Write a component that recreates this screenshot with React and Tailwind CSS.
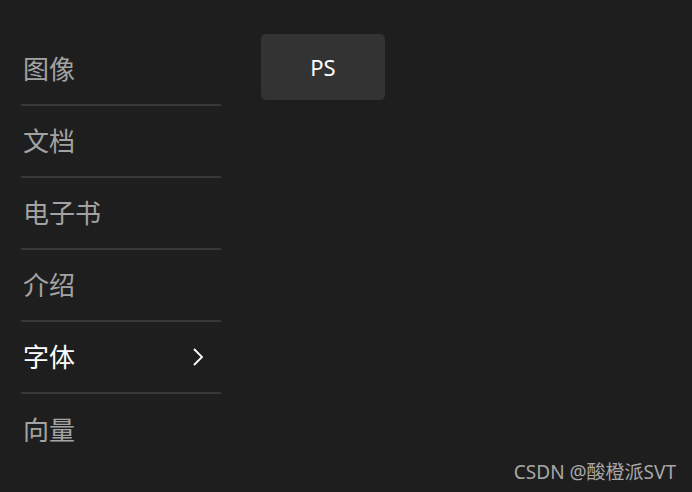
import React from 'react';

const items = [
    { label: '图像' },
    { label: '文档' },
    { label: '电子书' },
    { label: '介绍' },
    { label: '字体', active: true },
    { label: '向量' },
];

// ── Sidebar item ──────────────────────────────────────────
const NavItem = ({ label, active, last }) => (
    <div
        className={`flex items-center justify-between h-[72px] pl-[2px] pr-[17px] ${last ? '' : 'border-b-2 border-[#383838]'}`}
    >
        <span className={`text-[26px] leading-none ${active ? 'text-white' : 'text-[#a3a3a3]'}`}>{label}</span>
        {active && (
            <svg width="12" height="20" viewBox="0 0 12 20" fill="none">
                <path d="M2 2 L10 10 L2 18" stroke="#ffffff" strokeWidth="1.8" />
            </svg>
        )}
    </div>
);

export default function App() {
    return (
        <div
            className="w-[692px] h-[492px] bg-[#1e1e1e] relative overflow-hidden"
            style={{ fontFamily: '"Noto Sans", "Noto Sans CJK SC", sans-serif' }}
        >
            <div className="flex pt-[34px] pl-[21px] gap-[40px]">
                <div className="w-[200px]">
                    {items.map((it, i) => (
                        <NavItem key={it.label} {...it} last={i === items.length - 1} />
                    ))}
                </div>
                <div className="w-[124px] h-[66px] rounded-[5px] bg-[#333333] flex items-center justify-center text-white text-[22px]">
                    PS
                </div>
            </div>
            <div className="absolute right-[16px] bottom-[6px] text-[19px] text-[#a8a8a8]">CSDN @酸橙派SVT</div>
        </div>
    );
}
